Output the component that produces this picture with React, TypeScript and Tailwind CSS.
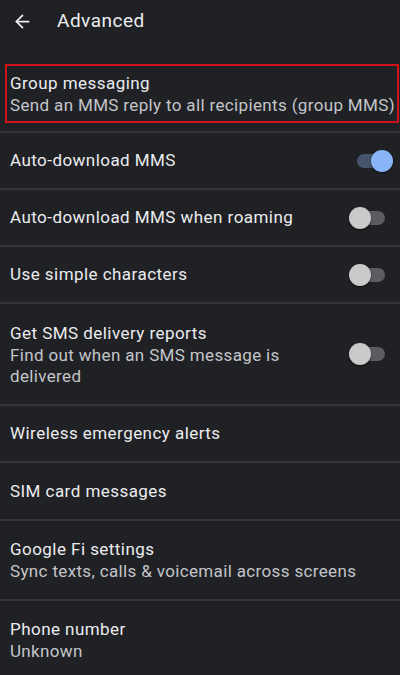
import { ArrowLeft } from "lucide-react";

function Toggle({ on }: { on: boolean }) {
  return (
    <div className="relative h-[22px] w-[44px] shrink-0">
      <div
        className={
          on
            ? "absolute left-[8px] top-[4px] h-[14px] w-[28px] rounded-full bg-[#46546b]"
            : "absolute left-[8px] top-[4px] h-[14px] w-[28px] rounded-full bg-[#5c5d61]"
        }
      />
      <div
        className={
          on
            ? "absolute right-0 top-0 size-[22px] rounded-full bg-[#8ab4f8] shadow-[0_1px_2px_rgba(0,0,0,0.6)]"
            : "absolute left-0 top-0 size-[22px] rounded-full bg-[#cacaca] shadow-[0_1px_2px_rgba(0,0,0,0.6)]"
        }
      />
    </div>
  );
}

function Row({
  title,
  subtitle,
  toggle,
  height,
}: {
  title: string;
  subtitle?: string[];
  toggle?: boolean;
  height: string;
}) {
  return (
    <div
      className={`flex items-center justify-between border-t-2 border-[#34353a] pl-[10px] pr-[7px] ${height}`}
    >
      <div className="min-w-0">
        <p className="text-[17px] leading-[23px] tracking-[0.45px] text-[#ebecef]">{title}</p>
        {subtitle?.map((line) => (
          <p
            key={line}
            className="text-[17px] leading-[21px] tracking-[0.35px] text-[#c3c5ca]"
          >
            {line}
          </p>
        ))}
      </div>
      {toggle !== undefined && <Toggle on={toggle} />}
    </div>
  );
}

export default function App() {
  return (
    <div
      className="h-[675px] w-[400px] overflow-hidden bg-[#202125]"
      style={{ fontFamily: "Roboto, 'Liberation Sans', sans-serif" }}
    >
      <header className="flex h-[42px] items-center">
        <ArrowLeft className="ml-[12px] size-[21px] text-[#eceef0]" strokeWidth={2} />
        <h1 className="ml-[24px] text-[19px] tracking-[0.5px] text-[#eceef0]">Advanced</h1>
      </header>

      <div className="mt-[22px] mb-[8px] ml-[5px] mr-px flex h-[59px] flex-col justify-center border-2 border-[#d0141c] pl-[3px]">
        <p className="text-[17px] leading-[23px] tracking-[0.45px] text-[#ebecef]">
          Group messaging
        </p>
        <p className="whitespace-nowrap text-[17px] leading-[21px] tracking-[0.35px] text-[#c3c5ca]">
          Send an MMS reply to all recipients (group MMS)
        </p>
      </div>

      <Row title="Auto-download MMS" toggle height="h-[57px]" />
      <Row title="Auto-download MMS when roaming" toggle={false} height="h-[57px]" />
      <Row title="Use simple characters" toggle={false} height="h-[57px]" />
      <Row
        title="Get SMS delivery reports"
        subtitle={["Find out when an SMS message is", "delivered"]}
        toggle={false}
        height="h-[102px]"
      />
      <Row title="Wireless emergency alerts" height="h-[57px]" />
      <Row title="SIM card messages" height="h-[58px]" />
      <Row
        title="Google Fi settings"
        subtitle={["Sync texts, calls & voicemail across screens"]}
        height="h-[80px]"
      />
      <Row title="Phone number" subtitle={["Unknown"]} height="h-[80px]" />
    </div>
  );
}
